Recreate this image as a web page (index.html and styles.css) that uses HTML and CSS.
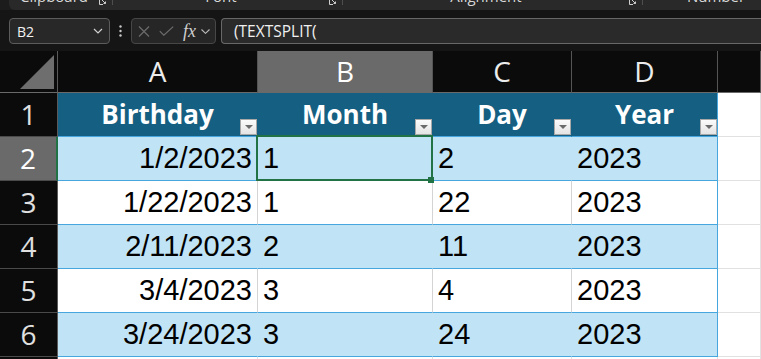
FILE: index.html
```html
<!DOCTYPE html>
<html lang="en">
<head>
    <meta charset="UTF-8">
    <title>Birthdays - TEXTSPLIT</title>
    <link rel="stylesheet" href="styles.css">
</head>
<body>
    <!-- Ribbon group labels (cut at the top) -->
    <div class="ribbon">
        <div class="ribbon-panel">
            <div class="group g-clipboard">
                <span class="group-label">Clipboard</span>
                <svg class="launcher" width="8" height="5" viewBox="0 0 8 5"><path d="M0.5 0V4.5H4M3 0L6.5 3.5M6.5 1.5V3.5H4.5" fill="none" stroke="#cfcfcf" stroke-width="1"/></svg>
                <span class="sep"></span>
            </div>
            <div class="group g-font">
                <span class="group-label">Font</span>
                <svg class="launcher" width="8" height="5" viewBox="0 0 8 5"><path d="M0.5 0V4.5H4M3 0L6.5 3.5M6.5 1.5V3.5H4.5" fill="none" stroke="#cfcfcf" stroke-width="1"/></svg>
                <span class="sep"></span>
            </div>
            <div class="group g-alignment">
                <span class="group-label">Alignment</span>
                <svg class="launcher" width="8" height="5" viewBox="0 0 8 5"><path d="M0.5 0V4.5H4M3 0L6.5 3.5M6.5 1.5V3.5H4.5" fill="none" stroke="#cfcfcf" stroke-width="1"/></svg>
                <span class="sep"></span>
            </div>
            <div class="group g-number">
                <span class="group-label">Number</span>
            </div>
        </div>
    </div>

    <!-- Formula bar -->
    <div class="formula-bar">
        <div class="name-box">
            <span>B2</span>
            <svg width="10" height="6" viewBox="0 0 10 6"><path d="M1 1L5 5L9 1" fill="none" stroke="#d0d0d0" stroke-width="1.2"/></svg>
        </div>
        <div class="grip">
            <svg width="3" height="12" viewBox="0 0 3 12"><circle cx="1.5" cy="1.5" r="1.2" fill="#c8c8c8"/><circle cx="1.5" cy="6" r="1.2" fill="#c8c8c8"/><circle cx="1.5" cy="10.5" r="1.2" fill="#c8c8c8"/></svg>
        </div>
        <div class="fx-box">
            <svg class="fx-cancel" width="12" height="11" viewBox="0 0 12 11"><path d="M1 0.5L11 10.5M11 0.5L1 10.5" stroke="#6c6c6c" stroke-width="1.2"/></svg>
            <svg class="fx-enter" width="15" height="10" viewBox="0 0 15 10"><path d="M0.8 5.2L4.8 9.2L14.2 0.6" fill="none" stroke="#6c6c6c" stroke-width="1.2"/></svg>
            <span class="fx-label">fx</span>
            <svg class="fx-drop" width="9" height="5" viewBox="0 0 9 5"><path d="M0.5 0.5L4.5 4.3L8.5 0.5" fill="none" stroke="#bcbcbc" stroke-width="1.1"/></svg>
        </div>
        <div class="formula-input">(TEXTSPLIT(</div>
    </div>

    <!-- Worksheet -->
    <div class="sheet">
        <div class="corner"><div class="corner-tri"></div></div>
        <div class="col-head">A</div>
        <div class="col-head active">B</div>
        <div class="col-head">C</div>
        <div class="col-head">D</div>
        <div class="col-head"></div>

        <div class="row-head">1</div>
        <div class="th">Birthday<span class="filter-btn"></span></div>
        <div class="th">Month<span class="filter-btn"></span></div>
        <div class="th">Day<span class="filter-btn"></span></div>
        <div class="th last">Year<span class="filter-btn"></span></div>
        <div class="blank"></div>

        <div class="row-head active">2</div>
        <div class="td band num">1/2/2023</div>
        <div class="td band selected">1</div>
        <div class="td band">2</div>
        <div class="td band last">2023</div>
        <div class="blank"></div>

        <div class="row-head">3</div>
        <div class="td num">1/22/2023</div>
        <div class="td">1</div>
        <div class="td">22</div>
        <div class="td last">2023</div>
        <div class="blank"></div>

        <div class="row-head">4</div>
        <div class="td band num">2/11/2023</div>
        <div class="td band">2</div>
        <div class="td band">11</div>
        <div class="td band last">2023</div>
        <div class="blank"></div>

        <div class="row-head">5</div>
        <div class="td num">3/4/2023</div>
        <div class="td">3</div>
        <div class="td">4</div>
        <div class="td last">2023</div>
        <div class="blank"></div>

        <div class="row-head">6</div>
        <div class="td band num">3/24/2023</div>
        <div class="td band">3</div>
        <div class="td band">24</div>
        <div class="td band last">2023</div>
        <div class="blank"></div>

        <div class="row-head">7</div>
        <div class="blank"></div>
        <div class="blank"></div>
        <div class="blank"></div>
        <div class="blank"></div>
        <div class="blank"></div>
    </div>
</body>
</html>
```

FILE: styles.css
```css
/* Base */
* {
    margin: 0;
    padding: 0;
    box-sizing: border-box;
}

body {
    width: 761px;
    height: 359px;
    overflow: hidden;
    background: #0b0b0b;
    font-family: 'Open Sans', 'Noto Sans', sans-serif;
}

/* Ribbon */
.ribbon {
    height: 10px;
    padding-left: 9px;
    background: #1c1c1c;
    overflow: hidden;
}

.ribbon-panel {
    display: flex;
    height: 10px;
    background: #292929;
    border-bottom-left-radius: 6px;
    overflow: hidden;
}

.group {
    display: flex;
    align-items: flex-start;
    flex-shrink: 0;
}

.g-clipboard { width: 104px; }
.g-font { width: 230px; }
.g-alignment { width: 300px; }
.g-number { width: 146px; }

.group-label {
    flex: 1;
    margin-top: -11px;
    font-size: 15px;
    line-height: 15px;
    color: #d8d8d8;
    text-align: center;
    white-space: nowrap;
}

.launcher {
    margin-right: 5px;
}

.sep {
    width: 1px;
    height: 5px;
    background: #4e4e4e;
}

/* Formula bar */
.formula-bar {
    display: flex;
    align-items: center;
    height: 41px;
    padding: 8px 0 7px 9px;
    background: #151515;
}

.name-box {
    width: 101px;
    height: 26px;
    display: flex;
    align-items: center;
    justify-content: space-between;
    padding: 0 6px 0 7px;
    border: 1px solid #5c5c5c;
    border-radius: 4px;
    background: #282828;
    color: #f2f2f2;
    font-size: 14px;
}

.grip {
    width: 21px;
    display: flex;
    justify-content: center;
}

.fx-box {
    width: 85px;
    height: 26px;
    display: flex;
    align-items: center;
    padding-left: 6px;
    border: 1px solid #474747;
    border-radius: 4px;
    background: #262626;
}

.fx-enter {
    margin-left: 9px;
}

.fx-label {
    margin-left: 9px;
    font-family: 'Liberation Serif', serif;
    font-style: italic;
    font-size: 18px;
    line-height: 18px;
    color: #cfcfcf;
}

.fx-drop {
    margin-left: 5px;
    margin-top: 1px;
}

.formula-input {
    flex: 1;
    height: 26px;
    margin-left: 5px;
    display: flex;
    align-items: center;
    padding-left: 12px;
    border: 1px solid #686868;
    border-right: none;
    border-radius: 4px 0 0 4px;
    background: #2a2a2a;
    color: #f0f0f0;
    font-size: 15.5px;
}

/* Worksheet grid */
.sheet {
    display: grid;
    grid-template-columns: 58px 200px 175px 139px 146px 1fr;
    grid-template-rows: 42px;
    grid-auto-rows: 44px;
    height: 308px;
    overflow: hidden;
}

.corner {
    display: flex;
    justify-content: flex-end;
    align-items: flex-end;
    padding: 0 3px 3px 0;
    background: #0b0b0b;
    border-right: 1px solid #5a5a5a;
    border-bottom: 1px solid #6a6a6a;
}

.corner-tri {
    width: 34px;
    height: 34px;
    background: #6e6e6e;
    clip-path: polygon(100% 0, 100% 100%, 0 100%);
}

.col-head {
    background: #0b0b0b;
    color: #ececec;
    font-size: 28px;
    line-height: 41px;
    text-align: center;
    border-right: 1px solid #555;
    border-bottom: 1px solid #6a6a6a;
}

.col-head.active {
    background: #6a6a6a;
    color: #fff;
}

.row-head {
    background: #0b0b0b;
    color: #e0e0e0;
    font-size: 28px;
    line-height: 43px;
    text-align: center;
    border-right: 1px solid #5a5a5a;
    border-bottom: 1px solid #4a4a4a;
}

.row-head.active {
    background: #6a6a6a;
    color: #fff;
    border-right: 2px solid #217346;
}

/* Table */
.th {
    position: relative;
    background: #156082;
    color: #fff;
    font-weight: 700;
    font-size: 26px;
    line-height: 43px;
    text-align: center;
    border-right: 1px solid #156082;
    border-bottom: 1px solid #47a6dd;
    white-space: nowrap;
}

.filter-btn {
    position: absolute;
    right: 0;
    bottom: 1px;
    width: 17px;
    height: 16px;
    border: 1px solid #a8a8a8;
    background: linear-gradient(#fbfbfb, #e4e4e4);
}

.filter-btn::after {
    content: '';
    position: absolute;
    left: 4px;
    top: 5px;
    border-left: 4px solid transparent;
    border-right: 4px solid transparent;
    border-top: 4px solid #6b6b6b;
}

.td {
    padding: 0 5px;
    background: #fff;
    color: #000;
    font-family: 'Liberation Sans', Arial, sans-serif;
    font-size: 29px;
    line-height: 43px;
    white-space: nowrap;
    overflow: hidden;
    border-right: 1px solid #d4d4d4;
    border-bottom: 1px solid #47a6dd;
}

.td.band {
    background: #c0e4f5;
    border-right-color: #c0e4f5;
}

.td.num {
    text-align: right;
}

.th.last,
.td.last {
    border-right-color: #47a6dd;
}

.td.selected {
    position: relative;
    overflow: visible;
}

.td.selected::after {
    content: '';
    position: absolute;
    left: -2px;
    top: -2px;
    right: -1px;
    bottom: -1px;
    border: 2px solid #217346;
    z-index: 2;
}

.td.selected::before {
    content: '';
    position: absolute;
    right: -2px;
    bottom: -3px;
    width: 6px;
    height: 6px;
    background: #217346;
    z-index: 3;
}

.blank {
    background: #fff;
    border-right: 1px solid #e1e1e1;
    border-bottom: 1px solid #e1e1e1;
}
```
